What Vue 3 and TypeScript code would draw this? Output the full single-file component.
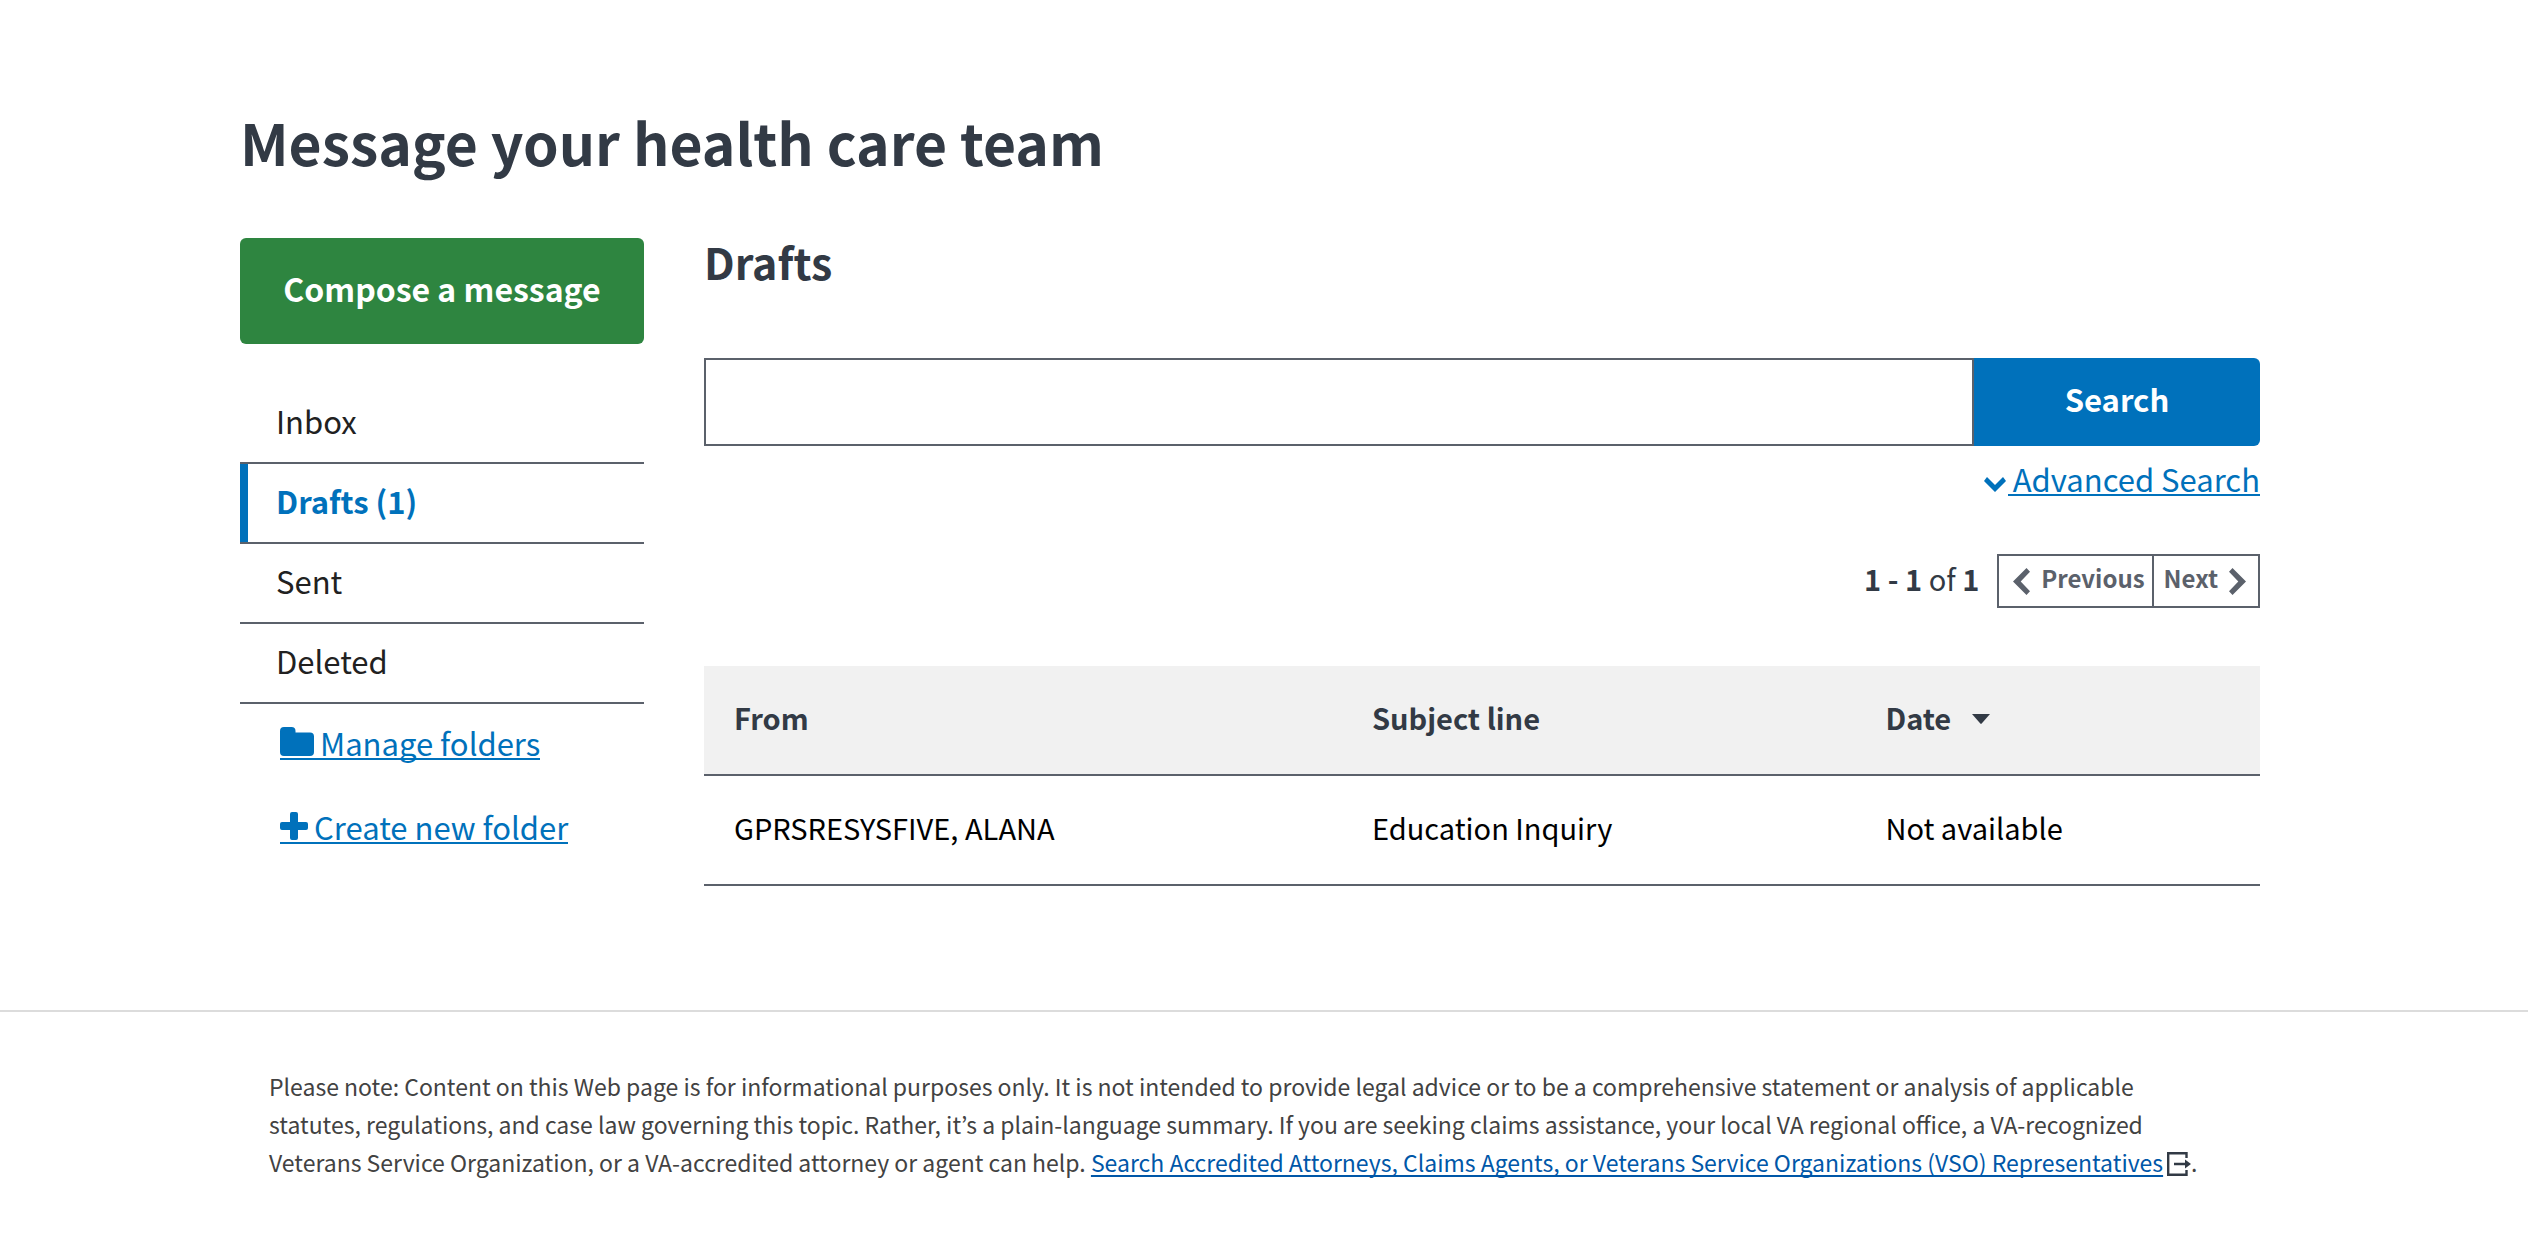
<script setup lang="ts">
import { ref } from 'vue'

interface Folder {
  name: string
  active?: boolean
}

interface Draft {
  from: string
  subject: string
  date: string
}

const folders: Folder[] = [
  { name: 'Inbox' },
  { name: 'Drafts (1)', active: true },
  { name: 'Sent' },
  { name: 'Deleted' },
]

const drafts: Draft[] = [
  { from: 'GPRSRESYSFIVE, ALANA', subject: 'Education Inquiry', date: 'Not available' },
]

const query = ref('')
</script>

<template>
  <div class="page">
    <main class="main">
      <h1>Message your health care team</h1>
      <div class="columns">
        <aside class="sidebar">
          <button type="button" class="compose"><span class="label">Compose a message</span></button>
          <nav aria-label="Folders">
            <ul class="folders">
              <li v-for="f in folders" :key="f.name" :class="{ active: f.active }">
                <a href="#" :aria-current="f.active ? 'page' : undefined">{{ f.name }}</a>
              </li>
            </ul>
          </nav>
          <div class="folder-actions">
            <a href="#" class="action">
              <svg width="34" height="29" viewBox="0 0 34 29" aria-hidden="true">
                <path d="M4 0h7.500a4 4 0 0 1 4 4v1.500H30a4 4 0 0 1 4 4V25a4 4 0 0 1-4 4H4a4 4 0 0 1-4-4V4a4 4 0 0 1 4-4z" />
              </svg>
              <span>Manage folders</span>
            </a>
            <a href="#" class="action">
              <svg width="28" height="28" viewBox="0 0 28 28" aria-hidden="true">
                <path d="M12 0h4a2 2 0 0 1 2 2v8h8a2 2 0 0 1 2 2v4a2 2 0 0 1-2 2h-8v8a2 2 0 0 1-2 2h-4a2 2 0 0 1-2-2v-8H2a2 2 0 0 1-2-2v-4a2 2 0 0 1 2-2h8V2a2 2 0 0 1 2-2z" />
              </svg>
              <span>Create new folder</span>
            </a>
          </div>
        </aside>

        <section class="content">
          <h2>Drafts</h2>
          <form class="search" role="search" @submit.prevent>
            <input v-model="query" type="text" aria-label="Search drafts" />
            <button type="submit"><span class="label">Search</span></button>
          </form>
          <a href="#" class="advanced">
            <svg width="22" height="15" viewBox="0 0 22 15" aria-hidden="true">
              <path d="M3 0 0 4l11 11L22 4l-3-4-8 8z" />
            </svg>
            <span>Advanced Search</span>
          </a>

          <div class="pager">
            <p><b>1 - 1</b> of <b>1</b></p>
            <div class="pager-buttons">
              <button type="button" class="previous">
                <svg width="17" height="27" viewBox="0 0 17 27" aria-hidden="true">
                  <path d="M13.500 0 17 3.700 7.700 13.500 17 23.300 13.500 27 0 13.500z" />
                </svg>
                <span class="label">Previous</span>
              </button>
              <button type="button" class="next">
                <span class="label">Next</span>
                <svg width="17" height="27" viewBox="0 0 17 27" aria-hidden="true">
                  <path d="M3.500 0 0 3.700 9.300 13.500 0 23.300 3.500 27 17 13.500z" />
                </svg>
              </button>
            </div>
          </div>

          <table>
            <colgroup>
              <col class="col-from" />
              <col class="col-subject" />
              <col />
            </colgroup>
            <thead>
              <tr>
                <th scope="col">From</th>
                <th scope="col">Subject line</th>
                <th scope="col" aria-sort="descending">
                  Date
                  <svg class="sort" width="18" height="10" viewBox="0 0 18 10" aria-hidden="true">
                    <path d="M0 0h18L9.500 9.700h-1z" />
                  </svg>
                </th>
              </tr>
            </thead>
            <tbody>
              <tr v-for="d in drafts" :key="d.from">
                <td>{{ d.from }}</td>
                <td>{{ d.subject }}</td>
                <td>{{ d.date }}</td>
              </tr>
            </tbody>
          </table>
        </section>
      </div>
    </main>

    <footer class="footer">
      <p>
        Please note: Content on this Web page is for informational purposes only. It is not intended to
        provide legal advice or to be a comprehensive statement or analysis of applicable statutes,
        regulations, and case law governing this topic. Rather, it’s a plain-language summary. If you are
        seeking claims assistance, your local VA regional office, a VA-recognized Veterans Service
        Organization, or a VA-accredited attorney or agent can help.
        <a href="#">Search Accredited Attorneys, Claims Agents, or Veterans Service Organizations (VSO) Representatives</a>
        <svg class="external" width="24" height="24" viewBox="0 0 24 24" aria-hidden="true">
          <path d="M19.500 6V1.200H1.200v21.600h18.300V18M7 12h14" fill="none" stroke="currentColor" stroke-width="2.400" />
          <path d="M18 7.500 24 12l-6 4.500z" />
        </svg>.
      </p>
    </footer>
  </div>
</template>

<style>
body {
  margin: 0;
  background: #fff;
}
</style>

<style scoped>
.page {
  font-family: "Noto Sans CJK KR", "Open Sans", sans-serif;
  font-size: 31px;
  line-height: 40px;
  color: #212121;
}

.main {
  padding: 106px 268px 0 240px;
}

h1,
h2,
p,
ul {
  margin: 0;
  padding: 0;
}

h1,
h2 {
  color: #323a45;
  font-weight: 700;
}

h1 {
  font-size: 57px;
  line-height: 70px;
}

h2 {
  font-size: 43px;
  line-height: 46px;
}

button {
  font-family: inherit;
  font-weight: 700;
  cursor: pointer;
}

svg {
  flex: none;
  fill: currentColor;
}

.label {
  display: block;
  padding-bottom: 6px;
}

.columns {
  display: flex;
  gap: 60px;
  margin-top: 62px;
}

.sidebar {
  flex: 0 0 20%;
}

.content {
  flex: 1;
  display: flex;
  flex-direction: column;
}

.compose {
  display: block;
  width: 100%;
  height: 106px;
  padding: 0;
  border: 0;
  border-radius: 6px;
  background: #2e8540;
  color: #fff;
  font-size: 32px;
  line-height: 40px;
}

.folders {
  margin-top: 40px;
  list-style: none;
}

.folders li {
  border-bottom: 2px solid #5b616b;
}

.folders a {
  display: block;
  padding: 17px 36px 21px;
  color: #212121;
  text-decoration: none;
}

.folders .active {
  box-shadow: inset 8px 0 #0071bb;
}

.folders .active a {
  color: #0071bb;
  font-weight: 700;
}

.folder-actions {
  display: flex;
  flex-direction: column;
  align-items: flex-start;
  gap: 51px;
  margin: 23px 0 0 40px;
}

.action,
.advanced {
  display: flex;
  align-items: baseline;
  line-height: 31px;
  color: #0071bb;
  text-decoration: none;
}

.action {
  gap: 6px;
  border-bottom: 2px solid #0071bb;
}

.search {
  display: flex;
  height: 88px;
  margin-top: 74px;
}

.search input {
  flex: 1;
  box-sizing: border-box;
  min-width: 0;
  padding: 0 20px;
  border: 2px solid #5b616b;
  border-radius: 0;
  background: #fff;
  font: inherit;
  color: inherit;
}

.search button {
  width: 286px;
  padding: 0;
  border: 0;
  border-radius: 0 6px 6px 0;
  background: #0071bb;
  color: #fff;
  font-size: 31px;
  line-height: 40px;
}

.advanced {
  align-self: flex-end;
  gap: 2px;
  margin-top: 17px;
}

.advanced span {
  padding-left: 5px;
  border-bottom: 2px solid #0071bb;
}

.pager {
  display: flex;
  justify-content: flex-end;
  gap: 18px;
  margin-top: 58px;
}

.pager p {
  font-size: 29px;
  line-height: 48px;
  color: #323a45;
}

.pager-buttons {
  display: flex;
  box-sizing: border-box;
  height: 54px;
  border: 2px solid #5b616b;
}

.pager-buttons button {
  display: flex;
  align-items: center;
  gap: 11px;
  border: 0;
  background: #fff;
  color: #5b616b;
  font-size: 24px;
  line-height: 40px;
}

.pager-buttons .previous {
  padding: 0 7px 0 14px;
  border-right: 2px solid #5b616b;
}

.pager-buttons .next {
  padding: 0 12px 0 10px;
}

table {
  width: 100%;
  margin-top: 58px;
  border-spacing: 0;
  table-layout: fixed;
  font-size: 29px;
}

th,
td {
  padding: 31px 30px 37px;
  border-bottom: 2px solid #5b616b;
  text-align: left;
}

th {
  background: #f1f1f1;
  color: #323a45;
}

td {
  color: #000;
}

.col-from {
  width: 41%;
}

.col-subject {
  width: 33%;
}

.sort {
  margin-left: 14px;
  vertical-align: 6px;
}

.footer {
  margin-top: 124px;
  padding: 55px 320px 55px 269px;
  border-top: 2px solid #dcdcdc;
  font-size: 23px;
  line-height: 38px;
  color: #424242;
}

.footer a {
  color: #0057a8;
  text-decoration: underline;
  text-decoration-thickness: 2px;
  text-decoration-skip-ink: none;
  text-underline-offset: 3px;
}

.external {
  margin-left: 4px;
  color: #323a45;
  vertical-align: -4px;
}
</style>
